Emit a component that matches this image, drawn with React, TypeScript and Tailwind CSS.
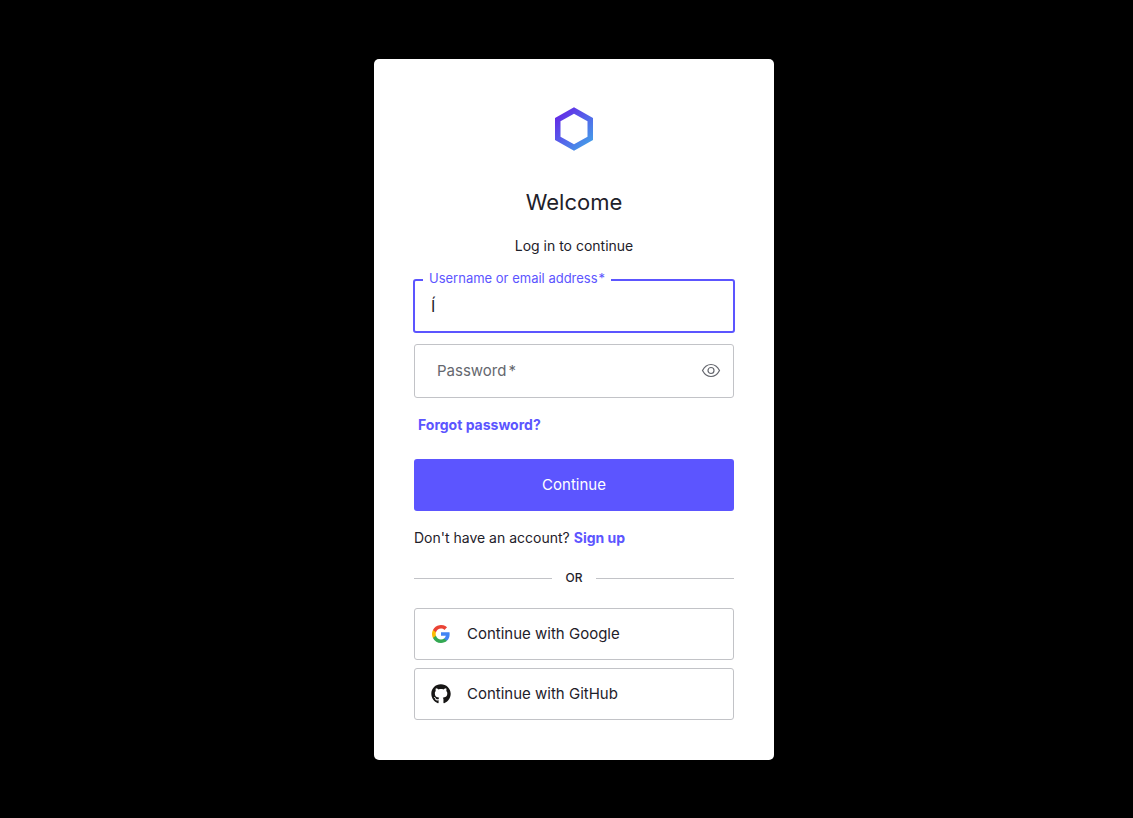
import { useState } from 'react'
import { FaGithub } from 'react-icons/fa'

const Logo = () => (
  <svg width="60" height="60" viewBox="0 0 60 60" fill="none" aria-label="Logo">
    <defs>
      <linearGradient id="logo" x1="16" y1="14" x2="46" y2="44" gradientUnits="userSpaceOnUse">
        <stop offset="0" stopColor="#632CE6" />
        <stop offset="0.5" stopColor="#5562EA" />
        <stop offset="1" stopColor="#459BE8" />
      </linearGradient>
    </defs>
    <path
      fillRule="evenodd"
      fill="url(#logo)"
      d="M30 8.3 49 19v22L30 51.8 11 41V19L30 8.3Zm0 6.4L16.5 22.3v15.4L30 45.3l13.5-7.6V22.3L30 14.7Z"
    />
  </svg>
)

const GoogleIcon = () => (
  <svg width="20" height="20" viewBox="-1 -1 20 20" aria-hidden="true">
    <path fill="#4285F4" d="M17.64 9.2c0-.64-.06-1.25-.16-1.84H9v3.48h4.84a4.14 4.14 0 0 1-1.8 2.72v2.26h2.92c1.7-1.57 2.68-3.88 2.68-6.62Z" />
    <path fill="#34A853" d="M9 18c2.43 0 4.47-.8 5.96-2.18l-2.92-2.26c-.8.54-1.84.86-3.04.86-2.34 0-4.33-1.58-5.04-3.71H.96v2.33A9 9 0 0 0 9 18Z" />
    <path fill="#FBBC05" d="M3.96 10.71a5.4 5.4 0 0 1 0-3.42V4.96H.96a9 9 0 0 0 0 8.08l3-2.33Z" />
    <path fill="#EA4335" d="M9 3.58c1.32 0 2.5.45 3.44 1.35l2.58-2.59A9 9 0 0 0 .96 4.96l3 2.33C4.67 5.16 6.66 3.58 9 3.58Z" />
  </svg>
)

const EyeIcon = () => (
  <svg width="20" height="20" viewBox="0 0 20 20" fill="none" stroke="currentColor" strokeWidth="1.2" aria-hidden="true">
    <path d="M1.5 9.5C3.6 5.5 6.4 3.5 10 3.5s6.4 2 8.5 6c-2.1 4-4.9 6-8.5 6s-6.4-2-8.5-6Z" />
    <circle cx="10" cy="9.5" r="3" />
  </svg>
)

const socials = [
  { name: 'Google', icon: <GoogleIcon /> },
  { name: 'GitHub', icon: <FaGithub size={20} className="text-[#161514]" /> },
]

export default function App() {
  const [username, setUsername] = useState('Í')
  const [password, setPassword] = useState('')
  const [showPassword, setShowPassword] = useState(false)

  return (
    <main className="flex min-h-screen items-center justify-center bg-black pt-px pl-[15px] font-['Inter',sans-serif] text-sm text-[#1e212a]">
      <section className="w-full max-w-[400px] rounded-[5px] bg-white p-10">
        {/* Header */}
        <header className="flex flex-col items-center text-center">
          <Logo />
          <h1 className="mt-7 text-[22px] leading-[30px]">Welcome</h1>
          <p className="mt-[19px] leading-5">Log in to continue</p>
        </header>

        {/* Login form */}
        <form className="mt-[23px]" onSubmit={(e) => e.preventDefault()}>
          <div className="relative -mx-px">
            <input
              id="username"
              type="text"
              required
              value={username}
              onChange={(e) => setUsername(e.target.value)}
              className="block h-[54px] w-full rounded-[3px] border-2 border-[#5c55ff] px-4 text-base outline-none"
            />
            <label htmlFor="username" className="absolute -top-2.5 left-2.5 bg-white px-1.5 text-[13px] leading-[18px] text-[#5c55ff]">
              Username or email address<span className="ml-px">*</span>
            </label>
          </div>

          <div className="relative mt-[11px] flex h-[54px] items-center rounded-[3px] border border-[#c2c3c7]">
            <label htmlFor="password" className="pointer-events-none absolute left-[22px] text-[15px] text-[#65676e]">
              {!password && <>Password<span className="ml-0.5">*</span></>}
            </label>
            <input
              id="password"
              type={showPassword ? 'text' : 'password'}
              required
              value={password}
              onChange={(e) => setPassword(e.target.value)}
              className="h-full min-w-0 flex-1 bg-transparent px-4 text-base outline-none"
            />
            <button
              type="button"
              aria-label="Show password"
              onClick={() => setShowPassword(!showPassword)}
              className="mr-3 text-[#65676e]"
            >
              <EyeIcon />
            </button>
          </div>

          <a href="#forgot" className="mt-[17px] ml-1 block w-fit leading-5 font-bold text-[#5c55ff]">
            Forgot password?
          </a>

          <button type="submit" className="mt-6 block h-[52px] w-full rounded-[3px] bg-[#5c55ff] text-[15px] text-white">
            Continue
          </button>
        </form>

        <p className="mt-[17px] leading-5">
          Don't have an account?
          <a href="#signup" className="ml-1 font-bold text-[#5c55ff]">Sign up</a>
        </p>

        {/* Divider */}
        <div className="mt-5 flex items-center text-xs leading-5 font-medium">
          <span className="h-px flex-1 bg-[#c2c3c7]" />
          <span className="w-11 text-center">OR</span>
          <span className="h-px flex-1 bg-[#c2c3c7]" />
        </div>

        {/* Social logins */}
        <div className="mt-5 flex flex-col gap-2">
          {socials.map((social) => (
            <button
              key={social.name}
              type="button"
              className="flex h-[52px] w-full items-center gap-4 rounded-[3px] border border-[#c2c3c7] px-4 text-[15px]"
            >
              {social.icon}
              Continue with {social.name}
            </button>
          ))}
        </div>
      </section>
    </main>
  )
}
